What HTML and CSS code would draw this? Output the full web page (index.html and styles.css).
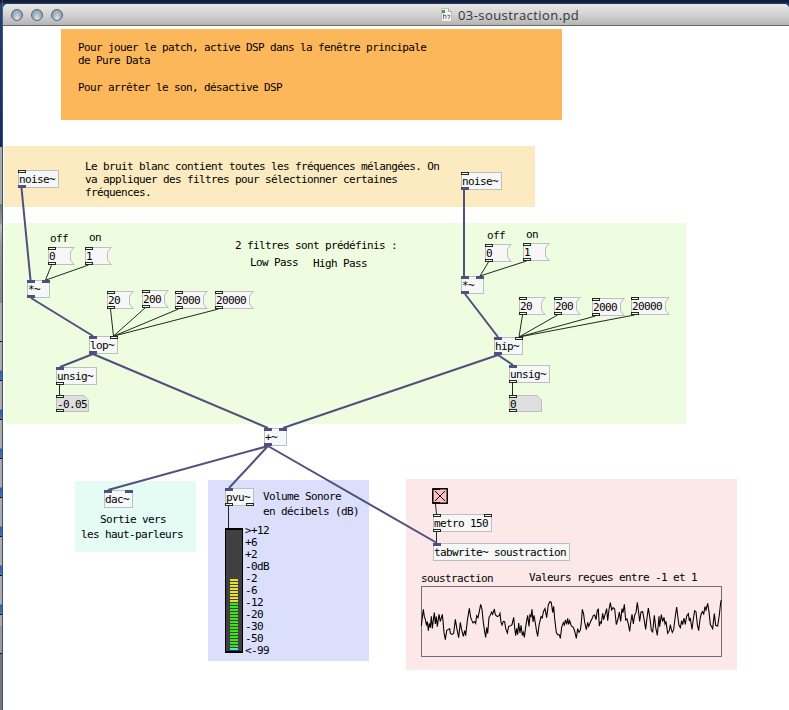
FILE: index.html
```
<!DOCTYPE html>
<html lang="fr">
<head>
<meta charset="utf-8">
<title>03-soustraction.pd</title>
<link rel="stylesheet" href="styles.css">
</head>
<body>
<div class="desktop">
  <aside class="behind">
    <div class="wallpaper"></div>
    <div class="back-bar"></div>
    <div class="back-tools"></div>
    <div class="back-list">
      <div class="row"></div><div class="row"></div><div class="row"></div><div class="row"></div><div class="row"></div><div class="row"></div><div class="row"></div><div class="row"></div>
    </div>
    <div class="back-foot"></div>
    <div class="back-end"></div>
  </aside>
  <main class="window">
    <header class="titlebar">
      <div class="lights"><span class="light"></span><span class="light"></span><span class="light"></span></div>
      <div class="title">
        <svg class="doc" width="11" height="14" viewBox="0 0 11 14"><path d="M.5.5h7l3 3v10H.5z" fill="#f1f1f1" stroke="#bdbdbd"/><path d="M7.5.5v3h3" fill="#ddd" stroke="#aaa"/><path d="M1 2h3v3H1z" fill="#4a9b58"/><path d="M2.5 6v5M3 7.5h2v3M6.500 7.500h2.500L7.500 11" fill="none" stroke="#777"/></svg>
        <span>03-soustraction.pd</span>
      </div>
    </header>
  </main>
  <div class="patch">
    <div class="panel orange" style="left:61px;top:29px;width:501px;height:91px"></div>
    <div class="panel cream" style="left:4px;top:146px;width:531px;height:61px"></div>
    <div class="panel green" style="left:5px;top:223px;width:681px;height:201px"></div>
    <div class="panel mint" style="left:75px;top:481px;width:121px;height:71px"></div>
    <div class="panel lavender" style="left:208px;top:480px;width:161px;height:181px"></div>
    <div class="panel pink" style="left:406px;top:479px;width:331px;height:191px"></div>

    <p class="note" style="left:78px;top:41px">Pour jouer le patch, active DSP dans la fenêtre principale<br>de Pure Data</p>
    <p class="note" style="left:78px;top:81px">Pour arrêter le son, désactive DSP</p>
    <p class="note" style="left:85px;top:160px">Le bruit blanc contient toutes les fréquences mélangées. On<br>va appliquer des filtres pour sélectionner certaines<br>fréquences.</p>
    <p class="note" style="left:50px;top:232px">off</p>
    <p class="note" style="left:89px;top:231px">on</p>
    <p class="note" style="left:235px;top:239px">2 filtres sont prédéfinis :</p>
    <p class="note" style="left:250px;top:256px">Low Pass</p>
    <p class="note" style="left:313px;top:257px">High Pass</p>
    <p class="note" style="left:487px;top:229px">off</p>
    <p class="note" style="left:526px;top:228px">on</p>
    <p class="note" style="left:100px;top:513px">Sortie vers</p>
    <p class="note" style="left:81px;top:528px">les haut-parleurs</p>
    <p class="note" style="left:263px;top:490px">Volume Sonore</p>
    <p class="note" style="left:263px;top:505px">en décibels (dB)</p>
    <p class="note" style="left:421px;top:572px">soustraction</p>
    <p class="note" style="left:529px;top:571px">Valeurs reçues entre -1 et 1</p>

    <div class="node obj" style="left:18px;top:170px;width:41px">noise~<i class="in"></i><i class="out sig"></i></div>
    <div class="node obj" style="left:461px;top:172px;width:41px">noise~<i class="in"></i><i class="out sig"></i></div>
    <div class="node msg" style="left:48px;top:247px;width:27px">0<i class="in"></i><i class="out"></i></div>
    <div class="node msg" style="left:85px;top:247px;width:27px">1<i class="in"></i><i class="out"></i></div>
    <div class="node obj" style="left:27px;top:280px;width:23px">*~<i class="in sig"></i><i class="in sig end"></i><i class="out sig"></i></div>
    <div class="node msg" style="left:107px;top:291px;width:27px">20<i class="in"></i><i class="out"></i></div>
    <div class="node msg" style="left:142px;top:290px;width:27px">200<i class="in"></i><i class="out"></i></div>
    <div class="node msg" style="left:175px;top:291px;width:33px">2000<i class="in"></i><i class="out"></i></div>
    <div class="node msg" style="left:215px;top:291px;width:39px">20000<i class="in"></i><i class="out"></i></div>
    <div class="node obj" style="left:89px;top:336px;width:29px">lop~<i class="in sig"></i><i class="in end"></i><i class="out sig"></i></div>
    <div class="node obj" style="left:56px;top:367px;width:41px">unsig~<i class="in sig"></i><i class="out"></i></div>
    <div class="node num" style="left:56px;top:395px;width:33px">-0.05<i class="in"></i><i class="out"></i></div>

    <div class="node msg" style="left:485px;top:244px;width:27px">0<i class="in"></i><i class="out"></i></div>
    <div class="node msg" style="left:523px;top:243px;width:27px">1<i class="in"></i><i class="out"></i></div>
    <div class="node obj" style="left:461px;top:276px;width:23px">*~<i class="in sig"></i><i class="in sig end"></i><i class="out sig"></i></div>
    <div class="node msg" style="left:519px;top:297px;width:27px">20<i class="in"></i><i class="out"></i></div>
    <div class="node msg" style="left:554px;top:297px;width:27px">200<i class="in"></i><i class="out"></i></div>
    <div class="node msg" style="left:592px;top:298px;width:33px">2000<i class="in"></i><i class="out"></i></div>
    <div class="node msg" style="left:631px;top:297px;width:39px">20000<i class="in"></i><i class="out"></i></div>
    <div class="node obj" style="left:494px;top:337px;width:29px">hip~<i class="in sig"></i><i class="in end"></i><i class="out sig"></i></div>
    <div class="node obj" style="left:509px;top:365px;width:41px">unsig~<i class="in sig"></i><i class="out"></i></div>
    <div class="node num" style="left:509px;top:395px;width:33px">0<i class="in"></i><i class="out"></i></div>

    <div class="node obj" style="left:264px;top:428px;width:23px">+~<i class="in sig"></i><i class="in sig end"></i><i class="out sig"></i></div>
    <div class="node obj" style="left:104px;top:490px;width:29px">dac~<i class="in sig"></i><i class="in sig end"></i></div>
    <div class="node obj" style="left:225px;top:488px;width:29px">pvu~<i class="in sig"></i><i class="out"></i><i class="out end"></i></div>
    <div class="node obj" style="left:433px;top:514px;width:59px">metro 150<i class="in"></i><i class="in end"></i><i class="out"></i></div>
    <div class="node obj" style="left:433px;top:543px;width:137px">tabwrite~ soustraction<i class="in sig"></i></div>

    <svg class="toggle" style="left:432px;top:488px" width="16" height="16"><rect x="1" y="1" width="14" height="14" fill="#ffbfbf" stroke="#000"/><path d="M.5.5h15v15H.5zM3 3l10 10M13 3L3 13" fill="none" stroke="#000"/><path d="M1 1.500h7M1 14.500h7" stroke="#000"/></svg>

    <div class="vu" style="left:225px;top:528px">
      <div class="meter"></div>
      <div class="scale"><span>&gt;+12</span><span>+6</span><span>+2</span><span>-0dB</span><span>-2</span><span>-6</span><span>-12</span><span>-20</span><span>-30</span><span>-50</span><span>&lt;-99</span></div>
    </div>

    <svg class="wires" width="789" height="710">
      <g stroke="#1c2b1c" stroke-width="1">
        <path d="M51.500 265L45.500 280M88.500 265L46 280M110.500 309L113.500 336M145 308L113.500 336M178.500 309L114 336M218.500 309L114 336M59.500 385V395"/>
        <path d="M488.500 262L480 276M526.500 261L480 276M522.500 315L519 337M557.500 315L519 337M595.500 316L519 337M634.500 315L519 337M512.500 383V395"/>
        <path d="M228.500 506V528M435.500 504L436.500 514M436.500 532V543"/>
      </g>
      <g class="audio">
        <path d="M21.500 188L30.500 280M464 190V276M31 298L93 336M93 354L60 367M93 354L268 428M465 294L498 337M498 355L283 428M498 355L513 365M268 446L108 490M268 446L229 488M268 446L437 543"/>
      </g>
      <rect x="421.500" y="586.500" width="300" height="70" fill="none" stroke="#707070"/>
      <g transform="translate(420 590) scale(.33333)">
        <polyline class="wave" points="4,108 7,82 10,58 13,80 16,88 19,104 22,95 25,122 28,100 31,113 34,79 37,115 41,82 43,68 46,102 49,80 52,110 57,73 61,94 67,73 69,92 72,128 76,149 80,122 84,119 89,116 91,130 96,133 101,130 106,88 111,118 116,143 121,97 125,120 130,139 134,122 137,137 142,92 148,55 152,82 156,92 159,99 164,95 167,100 170,77 174,83 178,64 182,43 186,58 190,98 194,125 197,142 200,113 203,130 207,82 210,77 215,66 218,73 223,57 226,74 232,80 237,77 240,70 243,97 246,105 250,94 254,95 257,115 262,129 266,109 272,107 276,104 281,82 284,114 287,137 290,115 293,134 296,99 300,129 303,106 307,136 310,127 313,142 318,104 323,76 327,109 330,75 333,80 336,58 339,96 342,76 346,99 349,119 353,139 357,106 363,80 367,84 370,65 375,56 380,83 385,44 390,35 394,38 398,67 401,49 404,86 409,128 413,134 418,134 421,145 425,112 430,98 433,105 436,90 440,103 443,85 446,103 449,92 454,108 460,112 464,123 469,145 473,116 477,127 481,121 484,98 487,58 491,73 494,97 499,119 503,97 506,109 511,97 517,84 520,76 524,75 528,89 532,61 535,58 538,108 541,96 544,99 548,70 551,89 555,74 560,56 563,92 567,59 571,38 575,60 579,53 584,57 589,104 594,87 598,66 602,94 606,56 609,68 613,43 617,90 621,87 625,102 629,124 632,99 636,73 640,102 644,75 648,68 652,37 656,68 659,94 663,66 668,65 673,92 677,118 681,84 685,54 690,86 694,121 698,126 703,76 707,112 712,136 717,79 719,110 724,74 728,95 732,82 735,102 738,94 743,130 748,122 751,104 754,118 757,127 761,119 766,78 770,51 774,84 777,106 781,113 785,92 788,104 792,84 796,103 800,78 805,71 808,93 811,84 816,118 820,87 824,62 828,65 832,104 836,122 840,88 844,70 848,65 851,74 855,50 858,60 863,40 867,65 871,104 875,110 878,116 883,71 887,106 893,108 898,75 902,38 904,30"/>
      </g>
    </svg>
  </div>
</div>
</body>
</html>
```
FILE: styles.css
```
* { box-sizing: border-box; }
body { margin: 0; overflow: hidden; background: #fff; }
.desktop {
  position: relative;
  width: 789px;
  height: 710px;
  display: flex;
  background: linear-gradient(#141d35 0, #141d35 2px, #24427c 4px, #203c72 30px, #0d2c63 148px);
}
.behind { width: 3px; display: flex; flex-direction: column; border-right: 1px solid #7777; }
.wallpaper { height: 147px; }
.back-bar { height: 57px; background: #aaa; }
.back-tools { height: 99px; background: linear-gradient(#777, #999 20px, #bbb 21px, #999 42px, #888); }
.back-list { height: 323px; background: #adadad; overflow: hidden; }
.row { height: 39px; border-bottom: 1px solid #111; background: linear-gradient(#adadad 28px, #2b62ac 29px, #4777b3 38px); }
.row:first-child { background: #adadad; }
.back-foot { height: 28px; background: #999; border-bottom: 1px solid #111; }
.back-end { flex: 1; background: #777; }
.window { flex: 1; margin-top: 4px; background: #fff; border-radius: 5px 5px 0 0; overflow: hidden; }
.titlebar {
  position: relative;
  height: 22px;
  display: flex;
  align-items: center;
  background: linear-gradient(#e8e8e8, #d5d5d5 45%, #b5b5b5);
  border-bottom: 1px solid #686868;
}
.lights { display: flex; gap: 8px; padding-left: 8px; }
.light {
  width: 12px;
  height: 12px;
  border-radius: 50%;
  border: 1px solid #5d6670;
  background: radial-gradient(ellipse at 50% 85%, #dbe6ee, #a4b4c3 50%, #7a8998);
}
.title {
  margin-left: 378px;
  display: flex;
  align-items: center;
  gap: 6px;
  font: 13px/20px "Open Sans", sans-serif;
  color: #353535;
  white-space: nowrap;
}
.title span { letter-spacing: .42px; }
.patch {
  position: absolute;
  inset: 0;
  font: 11px/13px "DejaVu Sans Mono", monospace;
  letter-spacing: -.62px;
  color: #000;
}
.panel, .note, .node, .toggle, .wires, .vu { position: absolute; margin: 0; }
.orange { background: #fcb75b; }
.cream { background: #fcebc0; }
.green { background: #eefce0; }
.mint { background: #e4fcf4; }
.lavender { background: #dcdffc; }
.pink { background: #fce8e8; }
.note { white-space: nowrap; }
.node {
  height: 18px;
  padding: 2px 0 0;
  white-space: nowrap;
  background: #f6f8f8;
  border: 1px solid #bcbec2;
}
.msg, .num { border: 0; padding: 3px 0 0 1px; background: none; isolation: isolate; }
.msg::before, .msg::after, .num::before, .num::after { content: ""; position: absolute; z-index: -1; }
.msg::before, .num::before { inset: 0; background: #bcbec2; }
.msg::after, .num::after { inset: 1px; background: #f8f6f6; }
.msg::before { clip-path: polygon(0 0, 100% 0, calc(100% - 4px) 5px, calc(100% - 4px) 13px, 100% 100%, 0 100%); }
.msg::after { right: 2px; clip-path: polygon(0 0, 100% 0, calc(100% - 3px) 4px, calc(100% - 3px) 12px, 100% 100%, 0 100%); }
.num { height: 17px; }
.num::before { clip-path: polygon(0 0, calc(100% - 5px) 0, 100% 5px, 100% 100%, 0 100%); }
.num::after { background: #dfdfdf; clip-path: polygon(0 0, calc(100% - 4px) 0, 100% 4px, 100% 100%, 0 100%); }
.in, .out {
  position: absolute;
  left: -1px;
  width: 8px;
  height: 3px;
  border: 1px solid #1c2b1c;
  background: #f2f6f0;
}
.in { top: -1px; }
.out { bottom: -1px; }
.msg > i, .num > i { left: 0; }
.msg > .in, .num > .in { top: 0; }
.msg > .out, .num > .out { bottom: 0; }
.end { left: auto; right: -1px; }
.sig { background: #50507f; border-color: #50507f; }
.wires { left: 0; top: 0; }
.audio { fill: none; stroke: #50507f; stroke-width: 2; }
.wave { fill: none; stroke: #000; stroke-width: 3.2; }
.vu { display: flex; gap: 2px; }
.meter {
  width: 18px;
  height: 125px;
  border: 1px solid #000;
  border-width: 2px 1px;
  background:
    repeating-linear-gradient(transparent 0 2px, #404040 2px 3px) 4px 49px / 8px 72px no-repeat,
    linear-gradient(#e8e024 0 24px, #3be412 24px 69px, #38eaf5 69px) 4px 49px / 8px 72px no-repeat,
    #404040;
}
.scale { display: flex; flex-direction: column; margin-top: -4px; }
.scale span { height: 12px; }
```
